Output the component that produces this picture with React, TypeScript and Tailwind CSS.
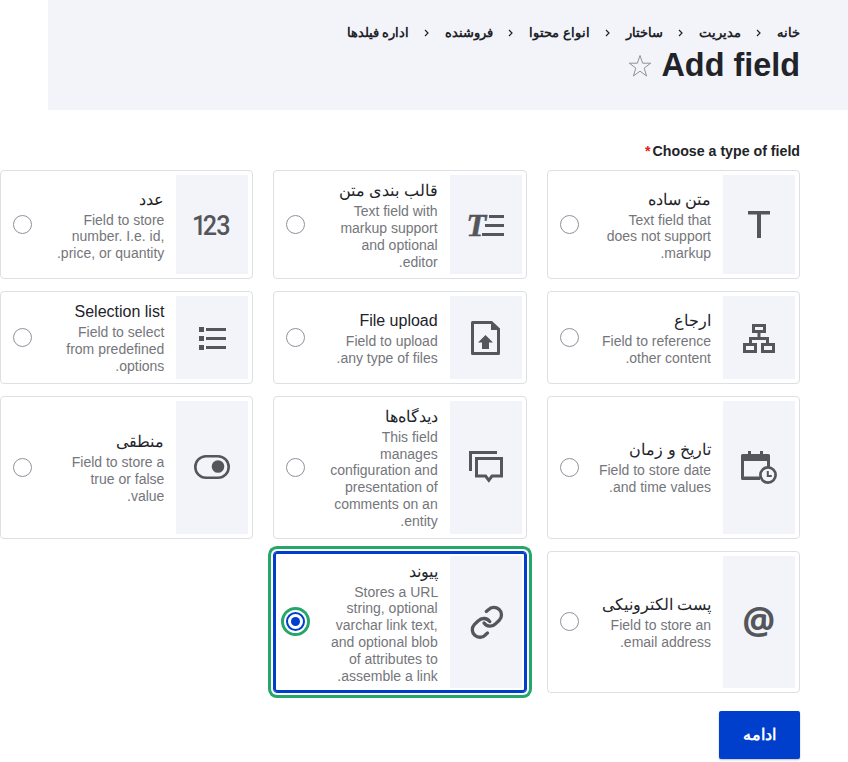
import type { ReactNode } from 'react';

const ink = '#55565b';

function Icon({ children }: { children: ReactNode }) {
  return (
    <svg width="36" height="36" viewBox="0 0 36 36" fill={ink} className="block overflow-visible">
      {children}
    </svg>
  );
}

const loop = 'M18.300 7.500L20.300 5.800A7.500 7.500 0 0 1 31.500 16L27.500 19.800A7.500 7.500 0 0 1 16 19';

const icons = {
  plain: (
    <Icon>
      <path d="M7 4h22v3.500h-9v23.500h-4V7.500H7z" />
    </Icon>
  ),
  formatted: (
    <Icon>
      <text x="-1.800" y="29" fontSize="32" fontWeight="700" fontStyle="italic" fontFamily="Liberation Serif" textLength="20" lengthAdjust="spacingAndGlyphs" direction="ltr" stroke={ink} strokeWidth="0.400">T</text>
      <path d="M21 8h15v3H21zM17 17h19v3H17zM14 26h22v3H14z" />
    </Icon>
  ),
  number: (
    <Icon>
      <text x="-2.200 9.700 24.600" y="28" fontSize="28" fontWeight="500" fontFamily="Roboto" transform="scale(0.900 1)" direction="ltr">123</text>
    </Icon>
  ),
  reference: (
    <Icon>
      <path fill="none" stroke={ink} strokeWidth="3" d="M10.500 6.500h11v6h-11zM1.500 25.500h11v7h-11zM19.500 25.500h11v7h-11zM16 12.500v7M7.500 25V19.500h17V25" transform="translate(2 0)" />
    </Icon>
  ),
  file: (
    <Icon>
      <g transform="translate(0 1)">
        <path fillRule="evenodd" d="M4.500 1h19.500L32 8.500V33.500q0 1.500-1.500 1.500h-26Q3 35 3 33.500v-31Q3 1 4.500 1zM6 4v28h23V10h-6V4z" />
        <path d="M17.500 15L25 22.500h-4V29h-7v-6.500h-4z" />
      </g>
    </Icon>
  ),
  list: (
    <Icon>
      <path d="M5 8h5v5H5zM12 9h20v3H12zM5 17h5v5H5zM12 18h20v3H12zM5 26h5v5H5zM12 27h20v3H12z" />
    </Icon>
  ),
  date: (
    <Icon>
      <path fillRule="evenodd" d="M7 2h3v3h9V2h3v3h5.500Q29 5 29 6.500V18h-3v-6H3v15.500h16V31H1.500Q0 31 0 29.500v-23Q0 5 1.500 5H7z" />
      <circle cx="27" cy="26" r="7.600" fill="#f3f4f9" stroke={ink} strokeWidth="2.700" />
      <path fill="none" stroke={ink} strokeWidth="2" d="M26.800 22v5h4" />
    </Icon>
  ),
  comments: (
    <Icon>
      <path d="M1 2h28v3H4v17H1z" />
      <path fill="none" stroke={ink} strokeWidth="3" d="M8.500 9.500h25v17.500h-9.500l-3.200 4.300-3.200-4.300H8.500z" />
    </Icon>
  ),
  boolean: (
    <Icon>
      <rect x="1.300" y="7.300" width="33.400" height="21.400" rx="10.700" fill="none" stroke={ink} strokeWidth="2.600" />
      <circle cx="24" cy="17.500" r="6.300" />
    </Icon>
  ),
  email: (
    <Icon>
      <text x="1.300" y="29.500" fontSize="38" fontWeight="700" fontFamily="Open Sans" textLength="33" lengthAdjust="spacingAndGlyphs" direction="ltr">@</text>
    </Icon>
  ),
  link: (
    <Icon>
      <g fill="none" stroke={ink} strokeWidth="3.300" strokeLinecap="round">
        <path d={loop} />
        <path d={loop} transform="rotate(180 18.900 18.300)" />
      </g>
    </Icon>
  ),
};

type Field = { icon: keyof typeof icons; title: string; text: string; selected?: boolean };

const fields: Field[] = [
  { icon: 'plain', title: 'متن ساده', text: 'Text field that does not support markup.' },
  { icon: 'formatted', title: 'قالب بندی متن', text: 'Text field with markup support and optional editor.' },
  { icon: 'number', title: 'عدد', text: 'Field to store number. I.e. id, price, or quantity.' },
  { icon: 'reference', title: 'ارجاع', text: 'Field to reference other content.' },
  { icon: 'file', title: 'File upload', text: 'Field to upload any type of files.' },
  { icon: 'list', title: 'Selection list', text: 'Field to select from predefined options.' },
  { icon: 'date', title: 'تاریخ و زمان', text: 'Field to store date and time values.' },
  { icon: 'comments', title: 'دیدگاه‌ها', text: 'This field manages configuration and presentation of comments on an entity.' },
  { icon: 'boolean', title: 'منطقی', text: 'Field to store a true or false value.' },
  { icon: 'email', title: 'پست الکترونیکی', text: 'Field to store an email address.' },
  { icon: 'link', title: 'پیوند', text: 'Stores a URL string, optional varchar link text, and optional blob of attributes to assemble a link.', selected: true },
];

const crumbs = ['خانه', 'مدیریت', 'ساختار', 'انواع محتوا', 'فروشنده', 'اداره فیلدها'];

function Radio({ on }: { on?: boolean }) {
  return on ? (
    <span className="flex size-[19px] items-center justify-center rounded-full border-2 border-[#003ecc] bg-white shadow-[0_0_0_2px_#fff,0_0_0_5px_#26a769]">
      <span className="size-[9px] rounded-full bg-[#003ecc]" />
    </span>
  ) : (
    <span className="size-[19px] rounded-full border border-[#8e929c] bg-white" />
  );
}

function Card({ field }: { field: Field }) {
  return (
    <label
      className={
        'flex items-stretch rounded-[4px] border border-[#dedfe4] bg-white p-1 ' +
        (field.selected ? 'shadow-[inset_0_0_0_2px_#003ecc,0_0_0_2px_#fff,0_0_0_5px_#26a769] border-[#003ecc]!' : '')
      }
    >
      <span className="flex w-[72px] shrink-0 items-center justify-center bg-[#f3f4f9]">{icons[field.icon]}</span>
      <span className="mr-3 flex w-[114px] shrink-0 flex-col justify-center pt-[1.25px]">
        <span className="mb-[2px] block text-[16px] leading-[21px] whitespace-nowrap text-[#222328]">{field.title}</span>
        <span className="block text-[14px] leading-[16.8px] text-[#75767b]">{field.text}</span>
      </span>
      <span className="mr-auto ml-2 flex items-center">
        <Radio on={field.selected} />
      </span>
    </label>
  );
}

export default function App() {
  return (
    <div dir="rtl" lang="fa" className="h-[762px] w-[848px] overflow-hidden bg-white font-['Liberation_Sans',sans-serif] text-[#222328]">
      <header className="h-[110px] w-[800px] bg-[#f3f4f9] pt-6 pr-12">
        <nav className="flex h-[18px] items-center text-[12.64px] leading-[18px] font-bold">
          {crumbs.map((crumb, i) => (
            <span key={crumb} className="flex items-center whitespace-nowrap">
              {i > 0 && (
                <svg width="5" height="8" viewBox="0 0 5 8" className="mr-4 ml-[15px]" fill="none" stroke="#222328" strokeWidth="1.200">
                  <path d="M1 1l3 3-3 3" />
                </svg>
              )}
              {crumb}
            </span>
          ))}
        </nav>
        <div className="flex items-center gap-[9px] pt-[3px]">
          <h1 className="text-[32.4px] leading-[40px] font-bold">Add field</h1>
          <svg width="24" height="24" viewBox="0 0 24 24" className="mt-px" fill="none" stroke="#8e929c" strokeWidth="1">
            <path d="M12 1.500l2.600 7.700h8.100l-6.500 4.900 2.400 7.900L12 17.200 5.400 22l2.400-7.900L1.300 9.200h8.100z" />
          </svg>
        </div>
      </header>
      <main className="w-[848px] pr-12">
        <div className="flex h-[60.2px] items-center gap-[2px] pt-[24px] text-[14.2px] font-bold">
          <span>Choose a type of field</span>
          <span className="text-[#dc2323]">*</span>
        </div>
        <div className="grid grid-cols-3 grid-rows-[109px_92.5px_142.85px_142.5px] gap-x-5 gap-y-3">
          {fields.map((field) => (
            <Card key={field.icon} field={field} />
          ))}
        </div>
        <button className="mt-[18px] flex h-12 w-[81px] items-center justify-center rounded-[2px] bg-[#003ecc] text-[16px] font-bold text-white shadow-[0_1px_2px_rgba(0,0,0,0.25)]">
          ادامه
        </button>
      </main>
    </div>
  );
}
